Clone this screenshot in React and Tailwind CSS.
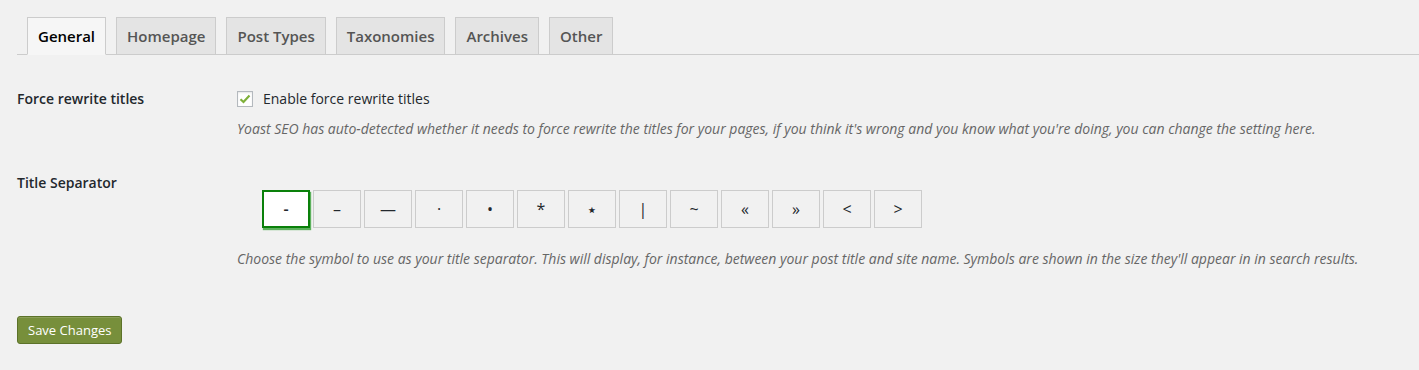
import React, { useState } from 'react';

const tabs = ['General', 'Homepage', 'Post Types', 'Taxonomies', 'Archives', 'Other'];
const separators = ['-', '–', '—', '·', '•', '*', '⋆', '|', '~', '«', '»', '<', '>'];

const App = () => {
  const [activeTab, setActiveTab] = useState('General');
  const [forceRewrite, setForceRewrite] = useState(true);
  const [separator, setSeparator] = useState('-');

  return (
    <div
      className="min-h-[370px] bg-[#f1f1f1] text-[#23282d]"
      style={{ fontFamily: '"Open Sans", "Liberation Sans", sans-serif' }}
    >
      {/* Tabs */}
      <div className="pt-[17px] pl-[17px]">
        <div className="flex items-end border-b border-[#cccccc] pl-[10px] gap-[10px]">
          {tabs.map((tab) => (
            <button
              key={tab}
              onClick={() => setActiveTab(tab)}
              className={
                tab === activeTab
                  ? '-mb-px h-[38px] px-[10px] border border-[#cccccc] border-b-[#f6f6f6] bg-[#f6f6f6] text-[15px] leading-[24px] font-semibold text-black'
                  : '-mb-px h-[38px] px-[10px] border border-[#cccccc] bg-[#e4e4e4] text-[15px] leading-[24px] font-semibold text-[#555555]'
              }
            >
              {tab}
            </button>
          ))}
        </div>
      </div>

      <div className="pl-[17px]">
        {/* Force rewrite titles */}
        <div className="grid grid-cols-[220px_1fr] mt-[33px]">
          <div className="text-[14px] leading-[22px] font-semibold">Force rewrite titles</div>
          <div>
            <label className="flex items-center h-[22px] gap-[10px] text-[14px]">
              <span
                onClick={() => setForceRewrite(!forceRewrite)}
                className="w-[16px] h-[16px] bg-white border border-[#b4b9be] shadow-[inset_0_1px_2px_rgba(0,0,0,0.1)] flex items-center justify-center cursor-pointer"
              >
                {forceRewrite && (
                  <svg width="12" height="10" viewBox="0 0 12 10">
                    <path d="M1.5 5.2 L4.5 8 L10.5 1.5" fill="none" stroke="#7fb03a" strokeWidth="2.2" />
                  </svg>
                )}
              </span>
              <span className="leading-[22px]">Enable force rewrite titles</span>
            </label>
            <p className="mt-[9px] text-[14px] leading-[20px] italic text-[#666666] whitespace-nowrap">
              Yoast SEO has auto-detected whether it needs to force rewrite the titles for your pages, if you think it's wrong and you know what you're doing, you can change the setting here.
            </p>
          </div>
        </div>

        {/* Title separator */}
        <div className="grid grid-cols-[220px_1fr] mt-[34px]">
          <div className="text-[14px] leading-[20px] font-semibold">Title Separator</div>
          <div>
            <div className="flex gap-[3px] ml-[25px] mt-[17px]">
              {separators.map((s) => (
                <button
                  key={s}
                  onClick={() => setSeparator(s)}
                  className={
                    s === separator
                      ? 'w-[48px] h-[38px] bg-white border-2 border-[#0a800a] shadow-[1px_2px_1px_rgba(30,150,30,0.7)] text-[16px] font-semibold text-[#23282d] flex items-center justify-center'
                      : s === '⋆'
                        ? 'w-[48px] h-[38px] bg-[#f1f1f1] border border-[#cccccc] text-[18px] text-[#23282d] flex items-center justify-center'
                        : 'w-[48px] h-[38px] bg-[#f1f1f1] border border-[#cccccc] text-[16px] text-[#23282d] flex items-center justify-center'
                  }
                  style={s === '⋆' ? { fontFamily: '"DejaVu Sans", sans-serif' } : undefined}
                >
                  {s}
                </button>
              ))}
            </div>
            <p className="mt-[21px] text-[14px] leading-[20px] italic text-[#666666] whitespace-nowrap">
              Choose the symbol to use as your title separator. This will display, for instance, between your post title and site name. Symbols are shown in the size they'll appear in in search results.
            </p>
          </div>
        </div>

        {/* Save */}
        <button className="mt-[47px] h-[28px] px-[10px] rounded-[3px] bg-[#778f3b] border border-[#5c7229] text-white text-[13px] leading-[26px] shadow-[inset_0_1px_0_rgba(255,255,255,0.15)]">
          Save Changes
        </button>
      </div>
    </div>
  );
};

export default App;
